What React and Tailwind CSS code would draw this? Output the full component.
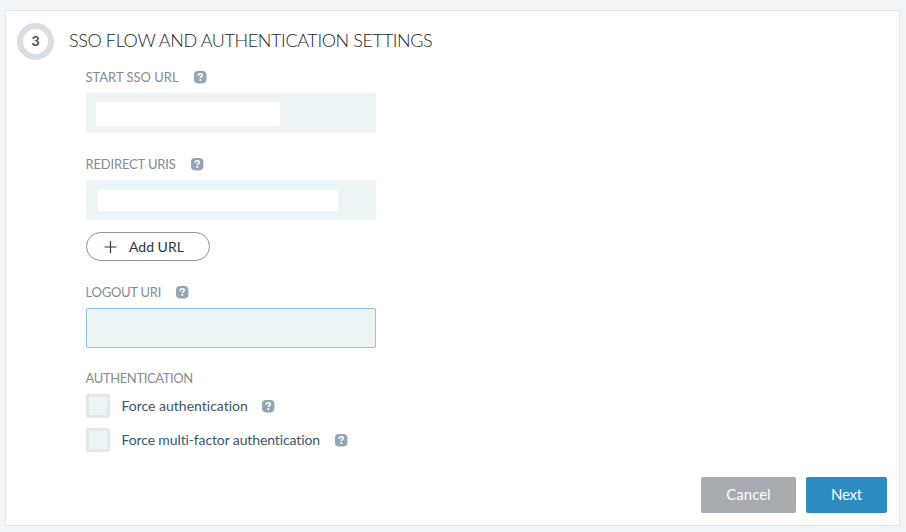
import React from "react";

function HelpIcon() {
  return (
    <svg width="13" height="13" viewBox="0 0 13 13" className="block shrink-0">
      <rect width="12.400" height="12.400" rx="3.800" fill="#95a3b5" />
      <path d="M4.100 4.700C4.200 3.300 5 2.700 6.200 2.700c1.200 0 2.050.65 2.050 1.650 0 1.350-1.950 1.450-1.950 2.750" fill="none" stroke="#fff" strokeWidth="1.600" />
      <rect x="5.400" y="8.100" width="1.800" height="1.800" rx=".4" fill="#fff" />
    </svg>
  );
}

function Label({ children, className, help = true }) {
  return (
    <div className="-ml-[0.5px] flex h-4 items-center text-[13px] leading-4 text-[#868c93]">
      <span className={"whitespace-nowrap " + className}>{children}</span>
      {help && <HelpIcon />}
    </div>
  );
}

function CheckRow({ children, className }) {
  return (
    <label className="flex h-6 items-center text-sm text-[#41546b]">
      <span className="mr-[11.5px] size-6 shrink-0 rounded-xs border-3 border-[#e3e7ea] bg-[#ecf4f6]" />
      <span className={"whitespace-nowrap " + className}>{children}</span>
      <HelpIcon />
    </label>
  );
}

export default function App() {
  return (
    <main className="h-[532px] w-[906px] bg-[#f1f5f8] pt-[10px] pl-[5px] font-['Lato','Open_Sans',sans-serif] [font-variant-ligatures:none]">
      <section className="flex h-[516px] w-[895px] flex-col border border-[#e1e5e9] bg-white">
        <header className="ml-[11px] mt-3 flex h-[37px] items-center">
          <div className="flex size-[37px] items-center justify-center rounded-full border-6 border-[#d8dee3] pb-px text-sm font-bold text-[#3f5168]">3</div>
          <h1 className="ml-[15px] w-[364px] whitespace-nowrap pb-1 text-lg leading-6 font-light tracking-[-0.38px] text-[#20262f]">SSO FLOW AND AUTHENTICATION SETTINGS</h1>
        </header>

        <div className="ml-20 mt-[9px] flex w-[290px] flex-col">
          <Label className="w-[108px] tracking-[-0.02px]">START SSO URL</Label>
          <div className="mt-2 h-10 rounded-xs bg-[#ecf4f6] pt-[9px] pl-[10px]">
            <div className="h-6 w-[184px] bg-white" />
          </div>

          <div className="mt-[23px]"><Label className="w-[105px] tracking-[-0.17px]">REDIRECT URIS</Label></div>
          <div className="mt-2 h-10 rounded-xs bg-[#ecf4f6] pt-[10px] pl-3">
            <div className="h-[21px] w-60 bg-white" />
          </div>
          <button className="mt-3 flex h-[29px] w-[124px] items-center rounded-full border border-[#8d939b] pl-[17px] text-sm text-[#30363f]">
            <svg width="13" height="12" viewBox="0 0 13 12" className="mr-3" fill="none" stroke="#30363f" strokeWidth="1.200">
              <path d="M6.500 0v12M.5 6h12" />
            </svg>
            <span className="whitespace-nowrap">Add URL</span>
          </button>

          <div className="mt-[23px]"><Label className="w-[90px] tracking-[-0.25px]">LOGOUT URI</Label></div>
          <div className="mt-2 h-10 rounded-xs border border-[#90c3ec] bg-[#ecf4f6]" />

          <div className="mt-[22px] mb-px"><Label help={false} className="tracking-[-0.38px]">AUTHENTICATION</Label></div>
          <div className="mt-[7px] flex flex-col gap-[10px]">
            <CheckRow className="w-[140.5px]">Force authentication</CheckRow>
            <CheckRow className="w-[213.5px] tracking-[-0.12px]">Force multi-factor authentication</CheckRow>
          </div>
        </div>

        <footer className="mt-[25px] mr-3 flex justify-end gap-[10px] text-[15px] text-white">
          <button className="h-9 w-[95px] rounded-xs bg-[#a6abaf] pb-px">Cancel</button>
          <button className="h-9 w-[81px] rounded-xs bg-[#2e8bc2] pb-px tracking-[-0.2px]">Next</button>
        </footer>
      </section>
    </main>
  );
}
